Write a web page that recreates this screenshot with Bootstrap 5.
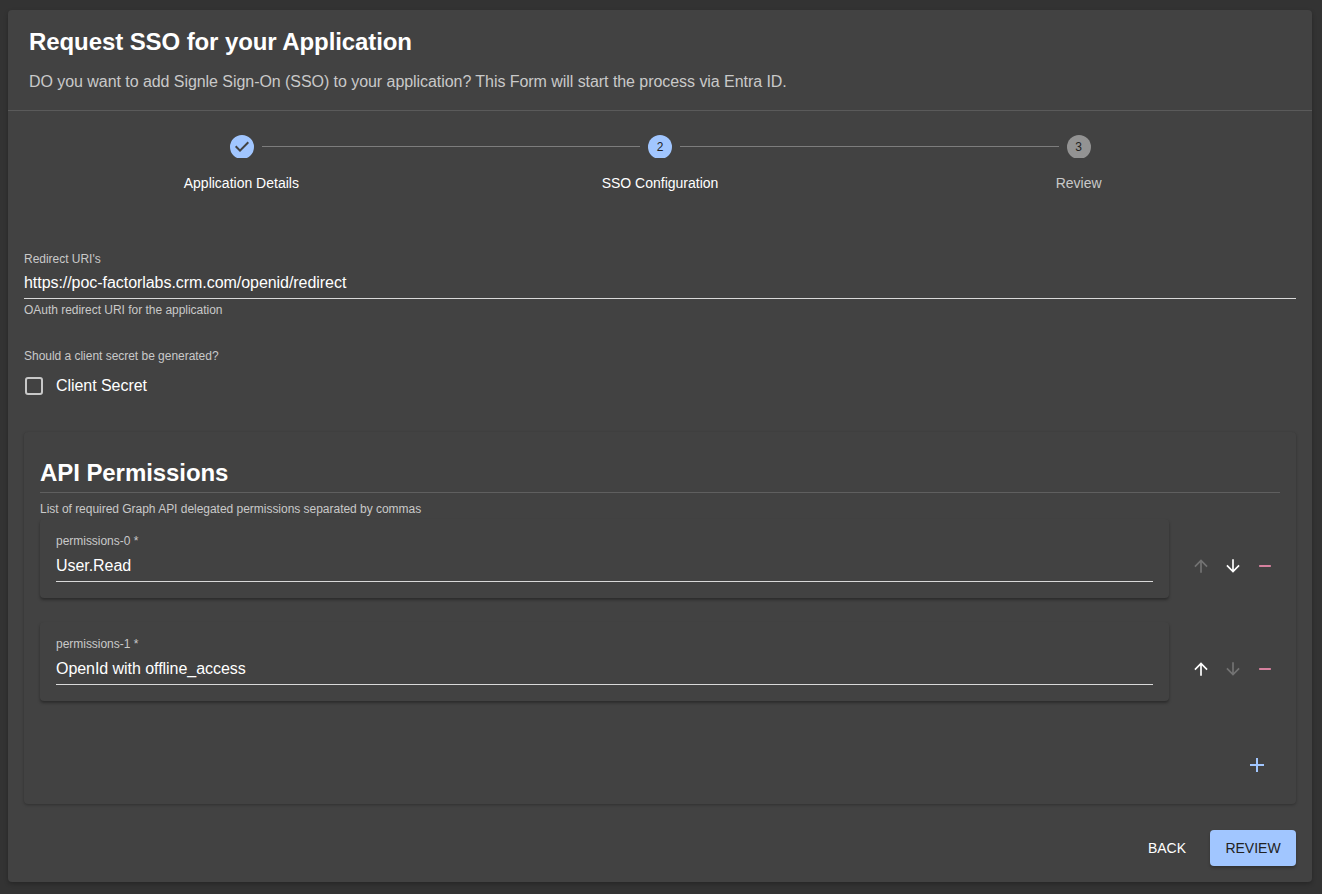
<!DOCTYPE html>
<html lang="en">
<head>
<meta charset="utf-8">
<title>Request SSO</title>
<link href="https://cdn.jsdelivr.net/npm/bootstrap@5.3.0/dist/css/bootstrap.min.css" rel="stylesheet">
<style>
html,body{height:100%;}
body{background:#333333;font-family:"Liberation Sans",Arial,sans-serif;color:#fff;overflow:hidden;}
.shell{margin:10px 10px 0 8px;height:872px;background:#424242;border-radius:4px;box-shadow:0 2px 4px rgba(0,0,0,.25);}
.head{height:101px;padding:16px 21px 0;border-bottom:1px solid #5a5a5a;}
.head h1{font-size:24px;font-weight:700;line-height:32px;margin:0 0 12px;letter-spacing:-.09px;}
.head p{font-size:16px;line-height:24px;color:#c9c9c9;margin:0;letter-spacing:-.055px;}
.steps{padding:24px 24px 0;display:grid;grid-template-columns:repeat(3,1fr);}
.stepcol{position:relative;display:flex;flex-direction:column;align-items:center;}
.dotclip{height:23px;width:24px;overflow:hidden;position:relative;z-index:1;margin-bottom:1px;}
.dotclip.nudge{margin-left:1px;}
.dot{width:24px;height:24px;border-radius:50%;background:#a1c6ff;color:#222;font-size:12px;display:flex;align-items:center;justify-content:center;}
.dot.off{background:#939393;}
.dot.plain{background:transparent;}
.link{position:absolute;top:11px;height:1px;background:#7d7d7d;left:calc(-50% + 21px);right:calc(50% + 20px);}
.stepcol:last-child .link{left:calc(-50% + 20px);}
.steplabel{font-size:14px;line-height:20px;margin-top:14px;}
.steplabel.off{color:#c9c9c9;}
.body{padding:0 16px;}
.cap{font-size:12px;line-height:16px;color:#c9c9c9;letter-spacing:-.025px;}
.uri{margin-top:58px;}
.val{font-size:16px;line-height:24px;color:#fff;letter-spacing:-.05px;}
.uri .val{margin-top:4px;}
.uline{border-bottom:1px solid #d9d9d9;padding-bottom:3px;}
.helper{margin-top:3px;}
.q{margin-top:30px;}
.chk{display:flex;align-items:center;gap:13px;margin-top:10px;padding-left:1px;font-size:16px;line-height:24px;height:24px;letter-spacing:-.05px;}
.box{width:18px;height:18px;border:2px solid #c8c8c8;border-radius:3px;}
.api{margin-top:34px;height:372px;padding:25px 16px 0;border-radius:4px;background:#424242;box-shadow:0 1px 3px rgba(0,0,0,.28);}
.api h2{font-size:24px;font-weight:700;line-height:32px;margin:0;padding-bottom:3px;border-bottom:1px solid #5f5f5f;letter-spacing:-.07px;}
.api > .cap{margin-top:8px;margin-bottom:2px;}
.permrow{display:flex;align-items:center;gap:16px;margin-right:-1px;}
.permrow + .permrow{margin-top:24px;}
.paper{flex:1 1 auto;border-radius:4px;background:#424242;box-shadow:0 2px 3px rgba(0,0,0,.35);padding:14px 16px 16px;}
.paper .val{margin-top:5px;}
.tools{display:flex;flex:0 0 96px;margin-top:14px;}
.tool{width:32px;height:32px;display:flex;align-items:center;justify-content:center;}
.tool svg{display:block;fill:currentColor;}
.dim{color:#737373;}
.live{color:#fff;}
.rem{color:#f48fb1;}
.addrow{display:flex;justify-content:flex-end;padding-right:11px;margin-top:52px;color:#a1c6ff;}
.addrow svg{fill:currentColor;display:block;}
.foot{display:flex;justify-content:flex-end;align-items:center;margin-top:26px;gap:7px;}
.foot .btn{font-size:14px;border-radius:4px;height:36px;padding:0;border:0;text-transform:uppercase;}
.foot .btn-back{color:#fff;width:72px;}
.foot .btn-go{background:#a1c6ff;color:#222;width:86px;box-shadow:0 2px 3px rgba(0,0,0,.25);}
</style>
</head>
<body>
<div class="shell">
  <div class="head">
    <h1>Request SSO for your Application</h1>
    <p>DO you want to add Signle Sign-On (SSO) to your application? This Form will start the process via Entra ID.</p>
  </div>
  <div class="steps">
    <div class="stepcol">
      <div class="dotclip nudge"><div class="dot plain"><svg width="24" height="24" viewBox="0 0 24 24" fill="#a1c6ff"><path d="M12 0a12 12 0 1 0 0 24 12 12 0 0 0 0-24zm-2 17l-5-5 1.4-1.4 3.6 3.6 7.6-7.6L19 8l-9 9z"/></svg></div></div>
      <div class="steplabel">Application Details</div>
    </div>
    <div class="stepcol">
      <div class="link"></div>
      <div class="dotclip"><div class="dot">2</div></div>
      <div class="steplabel">SSO Configuration</div>
    </div>
    <div class="stepcol">
      <div class="link"></div>
      <div class="dotclip"><div class="dot off">3</div></div>
      <div class="steplabel off">Review</div>
    </div>
  </div>
  <div class="body">
    <div class="uri">
      <div class="cap">Redirect URI's</div>
      <div class="val uline">https://poc-factorlabs.crm.com/openid/redirect</div>
      <div class="cap helper">OAuth redirect URI for the application</div>
    </div>
    <div class="cap q">Should a client secret be generated?</div>
    <div class="chk"><span class="box"></span><span>Client Secret</span></div>
    <div class="api">
      <h2>API Permissions</h2>
      <div class="cap">List of required Graph API delegated permissions separated by commas</div>
      <div class="permrow">
        <div class="paper">
          <div class="cap">permissions-0 *</div>
          <div class="val uline">User.Read</div>
        </div>
        <div class="tools">
          <div class="tool dim"><svg width="20" height="20" viewBox="0 0 24 24"><path d="M4 12l1.41 1.41L11 7.83V20h2V7.83l5.58 5.59L20 12l-8-8-8 8z"/></svg></div>
          <div class="tool live"><svg width="20" height="20" viewBox="0 0 24 24"><path d="M20 12l-1.41-1.41L13 16.17V4h-2v12.17l-5.58-5.59L4 12l8 8 8-8z"/></svg></div>
          <div class="tool rem"><svg width="20" height="20" viewBox="0 0 24 24"><path d="M19 13H5v-2h14v2z"/></svg></div>
        </div>
      </div>
      <div class="permrow">
        <div class="paper">
          <div class="cap">permissions-1 *</div>
          <div class="val uline">OpenId with offline_access</div>
        </div>
        <div class="tools">
          <div class="tool live"><svg width="20" height="20" viewBox="0 0 24 24"><path d="M4 12l1.41 1.41L11 7.83V20h2V7.83l5.58 5.59L20 12l-8-8-8 8z"/></svg></div>
          <div class="tool dim"><svg width="20" height="20" viewBox="0 0 24 24"><path d="M20 12l-1.41-1.41L13 16.17V4h-2v12.17l-5.58-5.59L4 12l8 8 8-8z"/></svg></div>
          <div class="tool rem"><svg width="20" height="20" viewBox="0 0 24 24"><path d="M19 13H5v-2h14v2z"/></svg></div>
        </div>
      </div>
      <div class="addrow"><svg width="24" height="24" viewBox="0 0 24 24"><path d="M19 13h-6v6h-2v-6H5v-2h6V5h2v6h6v2z"/></svg></div>
    </div>
    <div class="foot">
      <button class="btn btn-back" type="button">Back</button>
      <button class="btn btn-go" type="button">Review</button>
    </div>
  </div>
</div>
<script src="https://cdn.jsdelivr.net/npm/bootstrap@5.3.0/dist/js/bootstrap.bundle.min.js"></script>
</body>
</html>
